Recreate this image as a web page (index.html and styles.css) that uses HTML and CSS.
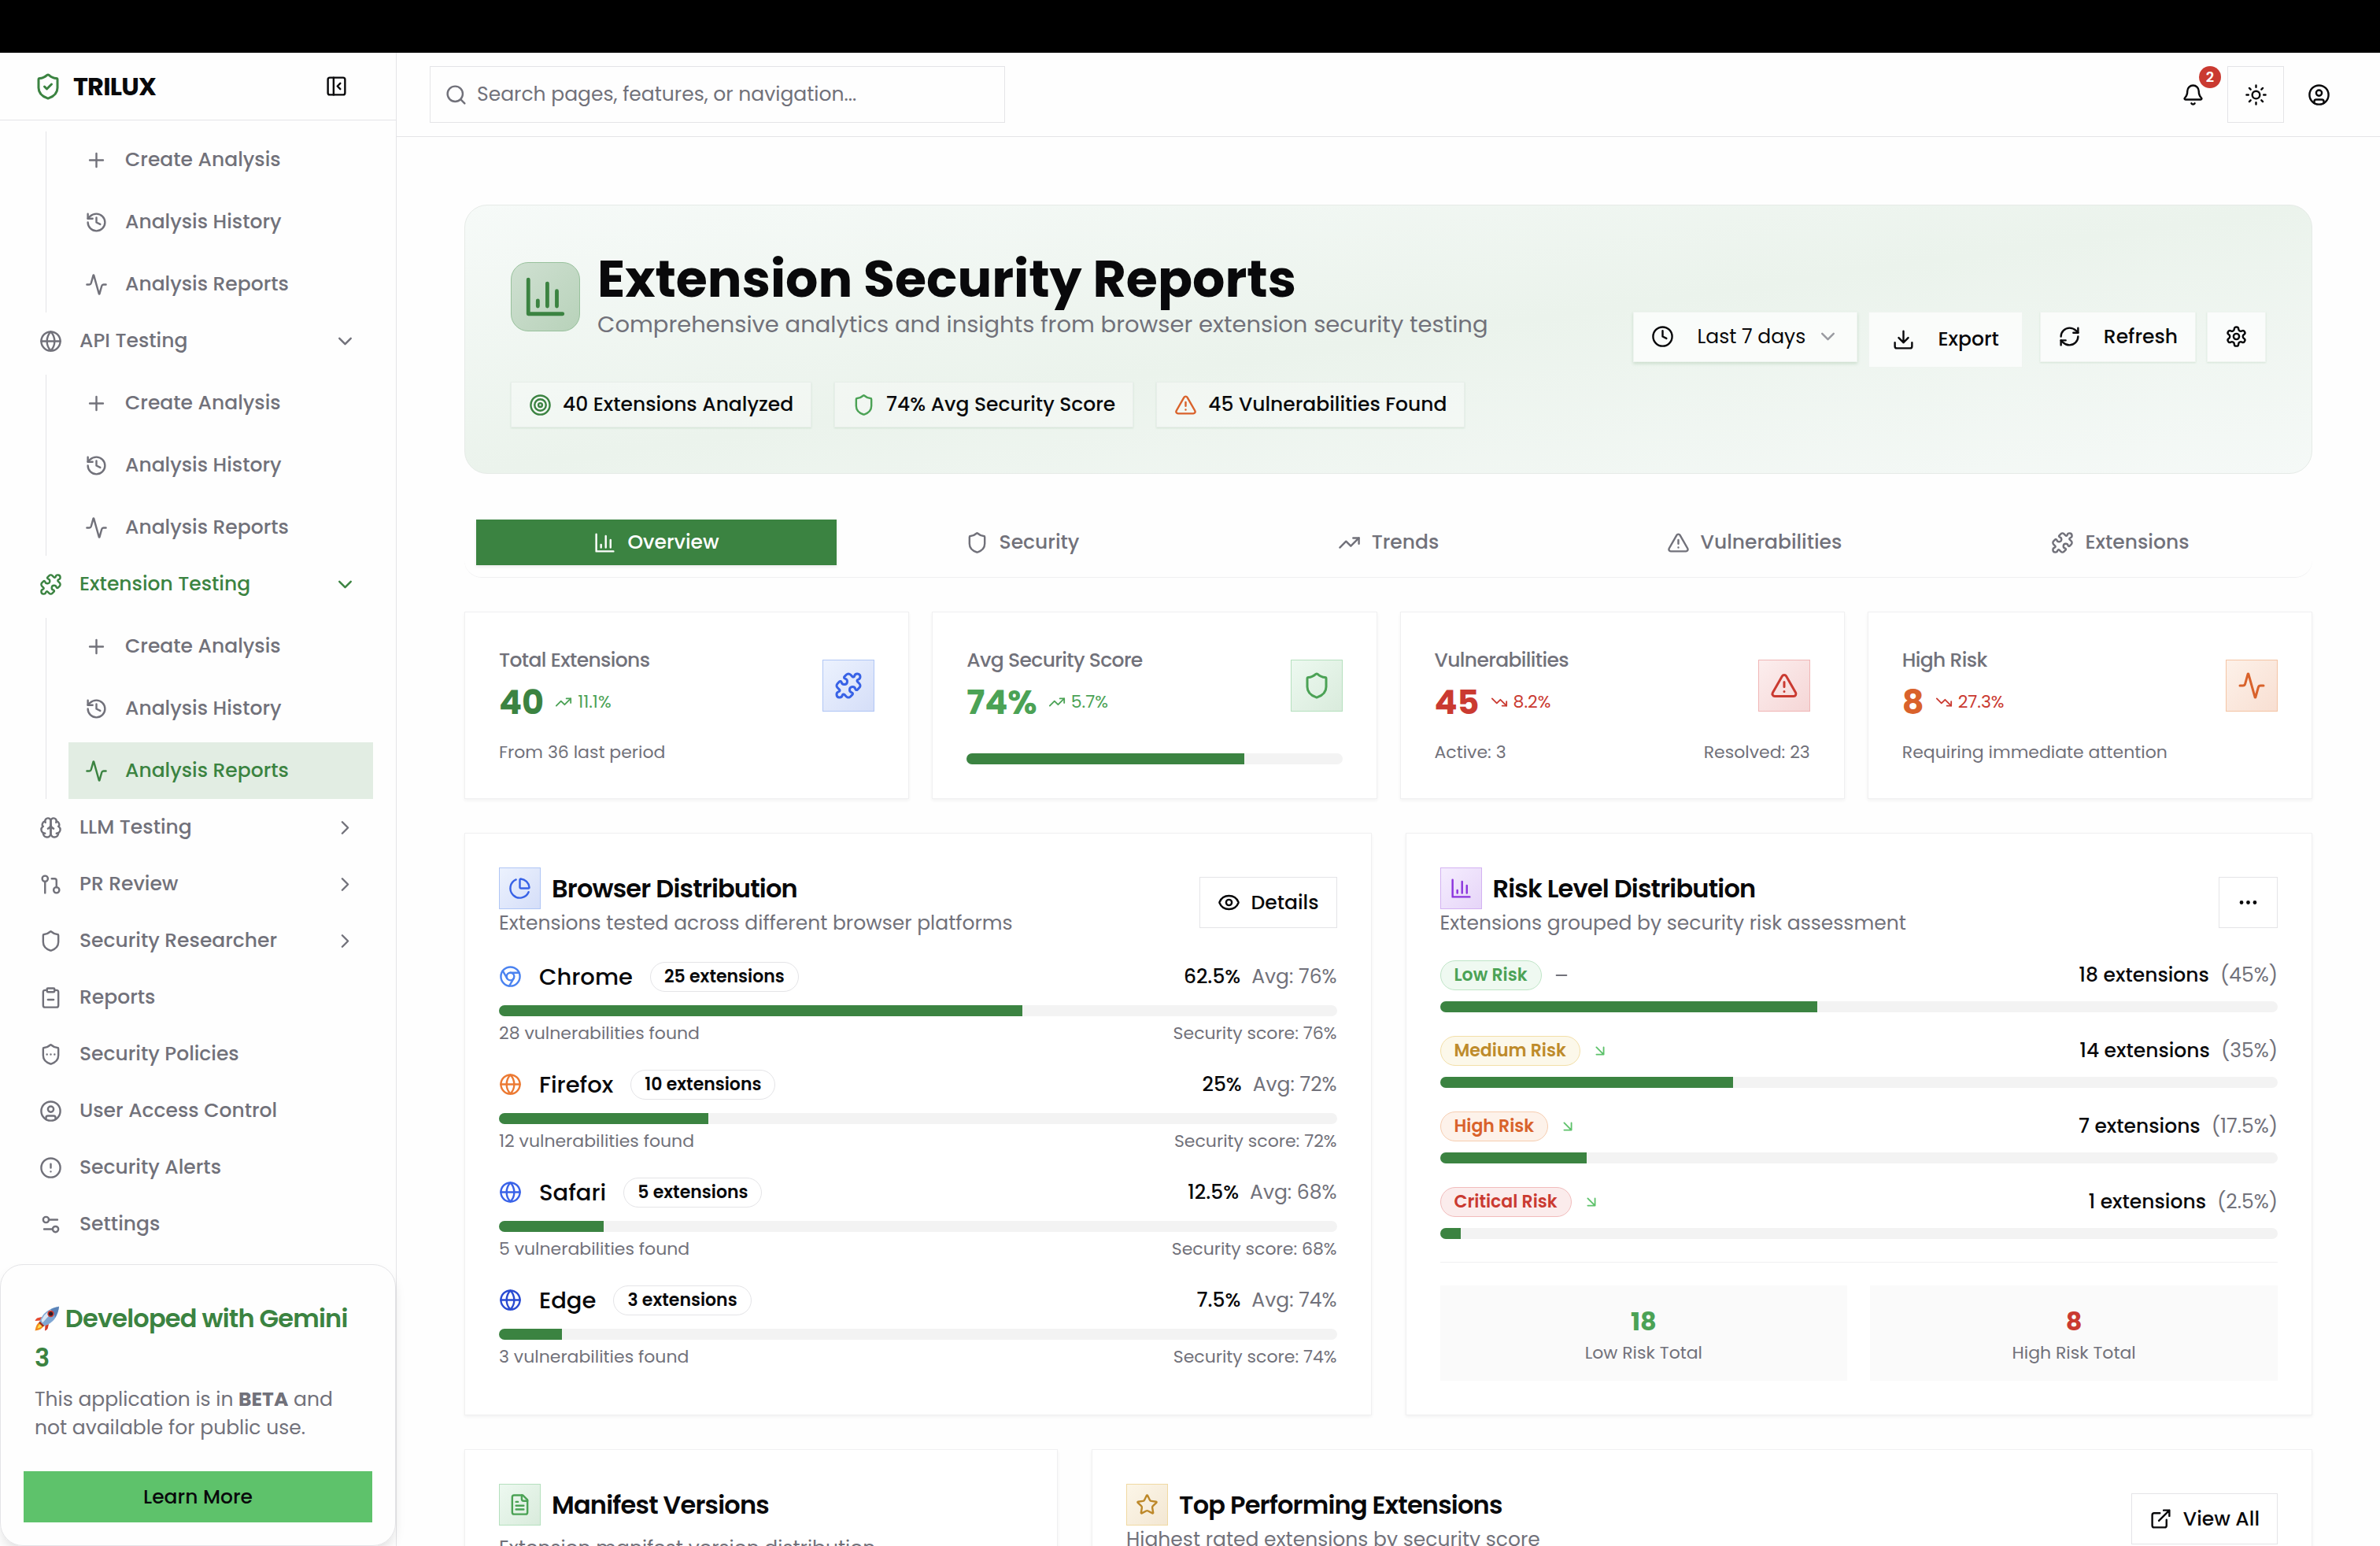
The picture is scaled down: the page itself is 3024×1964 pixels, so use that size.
FILE: index.html
```html
<!DOCTYPE html>
<html lang="en">
<head>
    <meta charset="UTF-8">
    <meta name="viewport" content="width=device-width, initial-scale=1.0">
    <title>TRILUX - Extension Security Reports</title>
    <link rel="stylesheet" href="styles.css">
</head>
<body>
    <!-- Icon sprite -->
    <svg class="sprite" aria-hidden="true">
        <symbol id="i-shield" viewBox="0 0 24 24"><path d="M20 13c0 5-3.5 7.5-7.66 8.95a1 1 0 0 1-.67-.01C7.5 20.5 4 18 4 13V6a1 1 0 0 1 1-1c2 0 4.5-1.2 6.24-2.72a1.17 1.17 0 0 1 1.52 0C14.51 3.81 17 5 19 5a1 1 0 0 1 1 1z"/></symbol>
        <symbol id="i-shield-check" viewBox="0 0 24 24"><path d="M20 13c0 5-3.5 7.5-7.66 8.95a1 1 0 0 1-.67-.01C7.5 20.5 4 18 4 13V6a1 1 0 0 1 1-1c2 0 4.5-1.2 6.24-2.72a1.17 1.17 0 0 1 1.52 0C14.51 3.81 17 5 19 5a1 1 0 0 1 1 1z"/><path d="m9 12 2 2 4-4"/></symbol>
        <symbol id="i-shield-dots" viewBox="0 0 24 24"><path d="M20 13c0 5-3.5 7.5-7.66 8.95a1 1 0 0 1-.67-.01C7.5 20.5 4 18 4 13V6a1 1 0 0 1 1-1c2 0 4.5-1.2 6.24-2.72a1.17 1.17 0 0 1 1.52 0C14.51 3.81 17 5 19 5a1 1 0 0 1 1 1z"/><path d="M8 12h.01M12 12h.01M16 12h.01"/></symbol>
        <symbol id="i-panel" viewBox="0 0 24 24"><rect width="18" height="18" x="3" y="3" rx="2"/><path d="M9 3v18"/><path d="m16 15-3-3 3-3"/></symbol>
        <symbol id="i-plus" viewBox="0 0 24 24"><path d="M5 12h14M12 5v14"/></symbol>
        <symbol id="i-minus" viewBox="0 0 24 24"><path d="M5 12h14"/></symbol>
        <symbol id="i-history" viewBox="0 0 24 24"><path d="M3 12a9 9 0 1 0 9-9 9.75 9.75 0 0 0-6.74 2.74L3 8"/><path d="M3 3v5h5"/><path d="M12 7v5l4 2"/></symbol>
        <symbol id="i-activity" viewBox="0 0 24 24"><path d="M22 12h-2.48a2 2 0 0 0-1.93 1.46l-2.35 8.36a.25.25 0 0 1-.48 0L9.24 2.18a.25.25 0 0 0-.48 0l-2.35 8.36A2 2 0 0 1 4.49 12H2"/></symbol>
        <symbol id="i-globe" viewBox="0 0 24 24"><circle cx="12" cy="12" r="10"/><path d="M12 2a14.5 14.5 0 0 0 0 20 14.5 14.5 0 0 0 0-20"/><path d="M2 12h20"/></symbol>
        <symbol id="i-puzzle" viewBox="0 0 24 24"><path d="M15.39 4.39a1 1 0 0 0 1.68-.474 2.5 2.5 0 1 1 3.014 3.015 1 1 0 0 0-.474 1.68l1.683 1.682a2.414 2.414 0 0 1 0 3.414L19.61 15.39a1 1 0 0 1-1.68-.474 2.5 2.5 0 1 0-3.014 3.015 1 1 0 0 1 .474 1.68l-1.683 1.682a2.414 2.414 0 0 1-3.414 0L8.61 19.61a1 1 0 0 0-1.68.474 2.5 2.5 0 1 1-3.014-3.015 1 1 0 0 0 .474-1.68l-1.683-1.682a2.414 2.414 0 0 1 0-3.414L4.39 8.61a1 1 0 0 1 1.68.474 2.5 2.5 0 1 0 3.014-3.015 1 1 0 0 1-.474-1.68l1.683-1.682a2.414 2.414 0 0 1 3.414 0z"/></symbol>
        <symbol id="i-brain" viewBox="0 0 24 24"><path d="M12 5a3 3 0 1 0-5.997.125 4 4 0 0 0-2.526 5.77 4 4 0 0 0 .556 6.588A4 4 0 1 0 12 18Z"/><path d="M12 5a3 3 0 1 1 5.997.125 4 4 0 0 1 2.526 5.77 4 4 0 0 1-.556 6.588A4 4 0 1 1 12 18Z"/><path d="M15 13a4.5 4.5 0 0 1-3-4 4.5 4.5 0 0 1-3 4"/><path d="M17.599 6.5a3 3 0 0 0 .399-1.375M6.003 5.125A3 3 0 0 0 6.401 6.5M3.477 10.896a4 4 0 0 1 .585-.396M19.938 10.5a4 4 0 0 1 .585.396M6 18a4 4 0 0 1-1.967-.516M19.967 17.484A4 4 0 0 1 18 18"/></symbol>
        <symbol id="i-pr" viewBox="0 0 24 24"><circle cx="18" cy="18" r="3"/><circle cx="6" cy="6" r="3"/><path d="M13 6h3a2 2 0 0 1 2 2v7M6 9v12"/></symbol>
        <symbol id="i-clipboard" viewBox="0 0 24 24"><rect width="8" height="4" x="8" y="2" rx="1"/><path d="M16 4h2a2 2 0 0 1 2 2v14a2 2 0 0 1-2 2H6a2 2 0 0 1-2-2V6a2 2 0 0 1 2-2h2"/><path d="M9 14h6"/></symbol>
        <symbol id="i-user" viewBox="0 0 24 24"><circle cx="12" cy="12" r="10"/><circle cx="12" cy="10" r="3"/><path d="M7 20.662V19a2 2 0 0 1 2-2h6a2 2 0 0 1 2 2v1.662"/></symbol>
        <symbol id="i-alert" viewBox="0 0 24 24"><circle cx="12" cy="12" r="10"/><path d="M12 8v4M12 16h.01"/></symbol>
        <symbol id="i-sliders" viewBox="0 0 24 24"><path d="M14 17H5M19 7h-9"/><circle cx="17" cy="17" r="3"/><circle cx="7" cy="7" r="3"/></symbol>
        <symbol id="i-down" viewBox="0 0 24 24"><path d="m6 9 6 6 6-6"/></symbol>
        <symbol id="i-right" viewBox="0 0 24 24"><path d="m9 18 6-6-6-6"/></symbol>
        <symbol id="i-search" viewBox="0 0 24 24"><circle cx="11" cy="11" r="8"/><path d="m21 21-4.3-4.3"/></symbol>
        <symbol id="i-bell" viewBox="0 0 24 24"><path d="M10.268 21a2 2 0 0 0 3.464 0"/><path d="M3.262 15.326A1 1 0 0 0 4 17h16a1 1 0 0 0 .74-1.673C19.41 13.956 18 12.499 18 8A6 6 0 0 0 6 8c0 4.499-1.411 5.956-2.738 7.326"/></symbol>
        <symbol id="i-sun" viewBox="0 0 24 24"><circle cx="12" cy="12" r="4"/><path d="M12 2v2M12 20v2M4.93 4.93l1.41 1.41M17.66 17.66l1.41 1.41M2 12h2M20 12h2M6.34 17.66l-1.41 1.41M19.07 4.93l-1.41 1.41"/></symbol>
        <symbol id="i-chart" viewBox="0 0 24 24"><path d="M3 3v18h18"/><path d="M18 17V9M13 17V5M8 17v-3"/></symbol>
        <symbol id="i-target" viewBox="0 0 24 24"><circle cx="12" cy="12" r="10"/><circle cx="12" cy="12" r="6"/><circle cx="12" cy="12" r="2"/></symbol>
        <symbol id="i-warning" viewBox="0 0 24 24"><path d="m21.73 18-8-14a2 2 0 0 0-3.48 0l-8 14A2 2 0 0 0 4 21h16a2 2 0 0 0 1.73-3"/><path d="M12 9v4M12 17h.01"/></symbol>
        <symbol id="i-clock" viewBox="0 0 24 24"><circle cx="12" cy="12" r="10"/><path d="M12 6v6l4 2"/></symbol>
        <symbol id="i-download" viewBox="0 0 24 24"><path d="M12 15V3M21 15v4a2 2 0 0 1-2 2H5a2 2 0 0 1-2-2v-4M7 10l5 5 5-5"/></symbol>
        <symbol id="i-refresh" viewBox="0 0 24 24"><path d="M3 12a9 9 0 0 1 9-9 9.75 9.75 0 0 1 6.74 2.74L21 8"/><path d="M21 3v5h-5"/><path d="M21 12a9 9 0 0 1-9 9 9.75 9.75 0 0 1-6.74-2.74L3 16"/><path d="M8 16H3v5"/></symbol>
        <symbol id="i-gear" viewBox="0 0 24 24"><path d="M12.22 2h-.44a2 2 0 0 0-2 2v.18a2 2 0 0 1-1 1.73l-.43.25a2 2 0 0 1-2 0l-.15-.08a2 2 0 0 0-2.73.73l-.22.38a2 2 0 0 0 .73 2.73l.15.1a2 2 0 0 1 1 1.72v.51a2 2 0 0 1-1 1.74l-.15.09a2 2 0 0 0-.73 2.73l.22.38a2 2 0 0 0 2.73.73l.15-.08a2 2 0 0 1 2 0l.43.25a2 2 0 0 1 1 1.73V20a2 2 0 0 0 2 2h.44a2 2 0 0 0 2-2v-.18a2 2 0 0 1 1-1.73l.43-.25a2 2 0 0 1 2 0l.15.08a2 2 0 0 0 2.73-.73l.22-.39a2 2 0 0 0-.73-2.73l-.15-.08a2 2 0 0 1-1-1.74v-.5a2 2 0 0 1 1-1.74l.15-.09a2 2 0 0 0 .73-2.73l-.22-.38a2 2 0 0 0-2.73-.73l-.15.08a2 2 0 0 1-2 0l-.43-.25a2 2 0 0 1-1-1.73V4a2 2 0 0 0-2-2z"/><circle cx="12" cy="12" r="3"/></symbol>
        <symbol id="i-trend-up" viewBox="0 0 24 24"><path d="M16 7h6v6"/><path d="m22 7-8.5 8.5-5-5L2 17"/></symbol>
        <symbol id="i-trend-down" viewBox="0 0 24 24"><path d="M16 17h6v-6"/><path d="m22 17-8.5-8.5-5 5L2 7"/></symbol>
        <symbol id="i-pie" viewBox="0 0 24 24"><path d="M21 12c.552 0 1.005-.449.95-.998a10 10 0 0 0-8.953-8.951c-.55-.055-.998.398-.998.95v8a1 1 0 0 0 1 1z"/><path d="M21.21 15.89A10 10 0 1 1 8 2.83"/></symbol>
        <symbol id="i-eye" viewBox="0 0 24 24"><path d="M2.062 12.348a1 1 0 0 1 0-.696 10.75 10.75 0 0 1 19.876 0 1 1 0 0 1 0 .696 10.75 10.75 0 0 1-19.876 0"/><circle cx="12" cy="12" r="3"/></symbol>
        <symbol id="i-chrome" viewBox="0 0 24 24"><circle cx="12" cy="12" r="10"/><circle cx="12" cy="12" r="4"/><path d="M21.17 8H12M3.95 6.06 8.54 14M10.88 21.94 15.46 14"/></symbol>
        <symbol id="i-dots" viewBox="0 0 24 24"><circle cx="5" cy="12" r="1"/><circle cx="12" cy="12" r="1"/><circle cx="19" cy="12" r="1"/></symbol>
        <symbol id="i-arrow-dr" viewBox="0 0 24 24"><path d="m7 7 10 10M17 7v10H7"/></symbol>
        <symbol id="i-file" viewBox="0 0 24 24"><path d="M15 2H6a2 2 0 0 0-2 2v16a2 2 0 0 0 2 2h12a2 2 0 0 0 2-2V7Z"/><path d="M14 2v4a2 2 0 0 0 2 2h4M10 9H8M16 13H8M16 17H8"/></symbol>
        <symbol id="i-star" viewBox="0 0 24 24"><path d="M11.525 2.295a.53.53 0 0 1 .95 0l2.31 4.679a2.123 2.123 0 0 0 1.595 1.16l5.166.756a.53.53 0 0 1 .294.904l-3.736 3.638a2.123 2.123 0 0 0-.611 1.878l.882 5.14a.53.53 0 0 1-.771.56l-4.618-2.428a2.122 2.122 0 0 0-1.973 0L6.396 21.01a.53.53 0 0 1-.77-.56l.881-5.139a2.122 2.122 0 0 0-.611-1.879L2.16 9.795a.53.53 0 0 1 .294-.906l5.165-.755a2.122 2.122 0 0 0 1.597-1.16z"/></symbol>
        <symbol id="i-external" viewBox="0 0 24 24"><path d="M15 3h6v6M10 14 21 3M18 13v6a2 2 0 0 1-2 2H5a2 2 0 0 1-2-2V8a2 2 0 0 1 2-2h6"/></symbol>
    </svg>

    <div class="top-strip"></div>

    <div class="app">
        <aside class="sidebar">
            <div class="brand">
                <svg class="icon icon-lg brand-icon"><use href="#i-shield-check"/></svg>
                <span class="brand-name">TRILUX</span>
                <button class="collapse-btn" aria-label="Collapse sidebar"><svg class="icon"><use href="#i-panel"/></svg></button>
            </div>

            <nav class="nav">
                <div class="nav-sub">
                    <a class="nav-item" href="#"><svg class="icon"><use href="#i-plus"/></svg>Create Analysis</a>
                    <a class="nav-item" href="#"><svg class="icon"><use href="#i-history"/></svg>Analysis History</a>
                    <a class="nav-item" href="#"><svg class="icon"><use href="#i-activity"/></svg>Analysis Reports</a>
                </div>
                <button class="nav-item"><svg class="icon"><use href="#i-globe"/></svg>API Testing<svg class="icon chevron"><use href="#i-down"/></svg></button>
                <div class="nav-sub spaced">
                    <a class="nav-item" href="#"><svg class="icon"><use href="#i-plus"/></svg>Create Analysis</a>
                    <a class="nav-item" href="#"><svg class="icon"><use href="#i-history"/></svg>Analysis History</a>
                    <a class="nav-item" href="#"><svg class="icon"><use href="#i-activity"/></svg>Analysis Reports</a>
                </div>
                <button class="nav-item open"><svg class="icon"><use href="#i-puzzle"/></svg>Extension Testing<svg class="icon chevron"><use href="#i-down"/></svg></button>
                <div class="nav-sub spaced">
                    <a class="nav-item" href="#"><svg class="icon"><use href="#i-plus"/></svg>Create Analysis</a>
                    <a class="nav-item" href="#"><svg class="icon"><use href="#i-history"/></svg>Analysis History</a>
                    <a class="nav-item active" href="#"><svg class="icon"><use href="#i-activity"/></svg>Analysis Reports</a>
                </div>
                <button class="nav-item"><svg class="icon"><use href="#i-brain"/></svg>LLM Testing<svg class="icon chevron"><use href="#i-right"/></svg></button>
                <button class="nav-item"><svg class="icon"><use href="#i-pr"/></svg>PR Review<svg class="icon chevron"><use href="#i-right"/></svg></button>
                <button class="nav-item"><svg class="icon"><use href="#i-shield"/></svg>Security Researcher<svg class="icon chevron"><use href="#i-right"/></svg></button>
                <a class="nav-item" href="#"><svg class="icon"><use href="#i-clipboard"/></svg>Reports</a>
                <a class="nav-item" href="#"><svg class="icon"><use href="#i-shield-dots"/></svg>Security Policies</a>
                <a class="nav-item" href="#"><svg class="icon"><use href="#i-user"/></svg>User Access Control</a>
                <a class="nav-item" href="#"><svg class="icon"><use href="#i-alert"/></svg>Security Alerts</a>
                <a class="nav-item" href="#"><svg class="icon"><use href="#i-sliders"/></svg>Settings</a>
            </nav>

            <div class="promo">
                <h3>
                    <svg class="rocket" viewBox="0 0 32 32" aria-hidden="true">
                        <path d="M9 14 3 15.500Q1 17 .5 19l7-.5z" fill="#e5482f"/>
                        <path d="M18 23l-1.500 6Q15 31 13 31.500l.5-7z" fill="#d33a28"/>
                        <path d="M7 20Q2 22 .5 31.500 9 30.500 12 25z" fill="#f28a1e"/>
                        <path d="M8 22.500Q4.500 24 3.500 28.500 8 28 10 24.500z" fill="#ffe04a"/>
                        <path d="M6.500 19.500Q12 4 31 .8 29 20 12.500 25.500z" fill="#7fa6d3"/>
                        <path d="M8.500 18Q14 5.500 31 .8 22 8 10 21.500z" fill="#dbe7f4"/>
                        <path d="M31 .8Q30 9 26 15 25 8 20 4.500 25 1.800 31 .8z" fill="#5a83b8"/>
                        <circle cx="20.500" cy="10" r="4.200" fill="#c9362c"/>
                        <circle cx="20.500" cy="10" r="2.600" fill="#2b1d2a"/>
                        <path d="M6.500 19.500l6 6-2.500.8-4.500-4.500z" fill="#9c2b22"/>
                    </svg>
                    Developed with Gemini 3
                </h3>
                <p>This application is in <strong>BETA</strong> and not available for public use.</p>
                <button class="learn-btn">Learn More</button>
            </div>
        </aside>

        <div class="main">
            <header class="topbar">
                <label class="search">
                    <svg class="icon"><use href="#i-search"/></svg>
                    <input type="text" placeholder="Search pages, features, or navigation..." aria-label="Search">
                </label>
                <div class="top-actions">
                    <button class="icon-btn" aria-label="Notifications"><svg class="icon"><use href="#i-bell"/></svg><span class="count">2</span></button>
                    <button class="icon-btn bordered" aria-label="Toggle theme"><svg class="icon"><use href="#i-sun"/></svg></button>
                    <button class="icon-btn" aria-label="Account"><svg class="icon"><use href="#i-user"/></svg></button>
                </div>
            </header>

            <main class="content">
                <section class="hero">
                    <div class="hero-info">
                        <div class="hero-head">
                            <div class="hero-icon"><svg class="icon"><use href="#i-chart"/></svg></div>
                            <div>
                                <h1>Extension Security Reports</h1>
                                <p>Comprehensive analytics and insights from browser extension security testing</p>
                            </div>
                        </div>
                        <div class="pills">
                            <div class="pill"><svg class="icon primary"><use href="#i-target"/></svg>40 Extensions Analyzed</div>
                            <div class="pill"><svg class="icon green"><use href="#i-shield"/></svg>74% Avg Security Score</div>
                            <div class="pill"><svg class="icon orange"><use href="#i-warning"/></svg>45 Vulnerabilities Found</div>
                        </div>
                    </div>
                    <div class="hero-actions">
                        <label class="hero-btn period">
                            <svg class="icon"><use href="#i-clock"/></svg>
                            <select aria-label="Period">
                                <option>Last 7 days</option>
                            </select>
                            <svg class="icon muted"><use href="#i-down"/></svg>
                        </label>
                        <button class="hero-btn export"><svg class="icon"><use href="#i-download"/></svg>Export</button>
                        <button class="hero-btn"><svg class="icon"><use href="#i-refresh"/></svg>Refresh</button>
                        <button class="hero-btn" aria-label="Settings"><svg class="icon"><use href="#i-gear"/></svg></button>
                    </div>
                </section>

                <div class="tabs" role="tablist">
                    <button class="tab active" role="tab" aria-selected="true"><svg class="icon"><use href="#i-chart"/></svg>Overview</button>
                    <button class="tab" role="tab"><svg class="icon"><use href="#i-shield"/></svg>Security</button>
                    <button class="tab" role="tab"><svg class="icon"><use href="#i-trend-up"/></svg>Trends</button>
                    <button class="tab" role="tab"><svg class="icon"><use href="#i-warning"/></svg>Vulnerabilities</button>
                    <button class="tab" role="tab"><svg class="icon"><use href="#i-puzzle"/></svg>Extensions</button>
                </div>

                <section class="stats">
                    <div class="card stat">
                        <div class="stat-top">
                            <div>
                                <div class="stat-label">Total Extensions</div>
                                <div class="stat-line"><span class="stat-value primary">40</span><span class="trend green"><svg class="icon icon-sm"><use href="#i-trend-up"/></svg>11.1%</span></div>
                            </div>
                            <div class="tile tile-lg blue"><svg class="icon icon-lg"><use href="#i-puzzle"/></svg></div>
                        </div>
                        <div class="stat-foot"><span>From 36 last period</span></div>
                    </div>
                    <div class="card stat">
                        <div class="stat-top">
                            <div>
                                <div class="stat-label">Avg Security Score</div>
                                <div class="stat-line"><span class="stat-value green">74%</span><span class="trend green"><svg class="icon icon-sm"><use href="#i-trend-up"/></svg>5.7%</span></div>
                            </div>
                            <div class="tile tile-lg mint"><svg class="icon icon-lg"><use href="#i-shield"/></svg></div>
                        </div>
                        <div class="stat-foot"><div class="bar"><div class="fill" style="width: 74%"></div></div></div>
                    </div>
                    <div class="card stat">
                        <div class="stat-top">
                            <div>
                                <div class="stat-label">Vulnerabilities</div>
                                <div class="stat-line"><span class="stat-value red">45</span><span class="trend red"><svg class="icon icon-sm"><use href="#i-trend-down"/></svg>8.2%</span></div>
                            </div>
                            <div class="tile tile-lg rose"><svg class="icon icon-lg"><use href="#i-warning"/></svg></div>
                        </div>
                        <div class="stat-foot"><span>Active: 3</span><span>Resolved: 23</span></div>
                    </div>
                    <div class="card stat">
                        <div class="stat-top">
                            <div>
                                <div class="stat-label">High Risk</div>
                                <div class="stat-line"><span class="stat-value orange">8</span><span class="trend red"><svg class="icon icon-sm"><use href="#i-trend-down"/></svg>27.3%</span></div>
                            </div>
                            <div class="tile tile-lg peach"><svg class="icon icon-lg"><use href="#i-activity"/></svg></div>
                        </div>
                        <div class="stat-foot"><span>Requiring immediate attention</span></div>
                    </div>
                </section>

                <section class="halves">
                    <div class="card">
                        <div class="card-head">
                            <div>
                                <h2><span class="tile blue"><svg class="icon"><use href="#i-pie"/></svg></span>Browser Distribution</h2>
                                <p>Extensions tested across different browser platforms</p>
                            </div>
                            <button class="outline-btn"><svg class="icon"><use href="#i-eye"/></svg>Details</button>
                        </div>
                        <div class="rows">
                            <div class="browser">
                                <div class="row-line"><svg class="icon chrome"><use href="#i-chrome"/></svg><span class="name">Chrome</span><span class="badge">25 extensions</span><span class="amount">62.5%</span><span class="muted">Avg: 76%</span></div>
                                <div class="bar"><div class="fill" style="width: 62.5%"></div></div>
                                <div class="row-foot"><span>28 vulnerabilities found</span><span>Security score: 76%</span></div>
                            </div>
                            <div class="browser">
                                <div class="row-line"><svg class="icon firefox"><use href="#i-globe"/></svg><span class="name">Firefox</span><span class="badge">10 extensions</span><span class="amount">25%</span><span class="muted">Avg: 72%</span></div>
                                <div class="bar"><div class="fill" style="width: 25%"></div></div>
                                <div class="row-foot"><span>12 vulnerabilities found</span><span>Security score: 72%</span></div>
                            </div>
                            <div class="browser">
                                <div class="row-line"><svg class="icon safari"><use href="#i-globe"/></svg><span class="name">Safari</span><span class="badge">5 extensions</span><span class="amount">12.5%</span><span class="muted">Avg: 68%</span></div>
                                <div class="bar"><div class="fill" style="width: 12.5%"></div></div>
                                <div class="row-foot"><span>5 vulnerabilities found</span><span>Security score: 68%</span></div>
                            </div>
                            <div class="browser">
                                <div class="row-line"><svg class="icon edge"><use href="#i-globe"/></svg><span class="name">Edge</span><span class="badge">3 extensions</span><span class="amount">7.5%</span><span class="muted">Avg: 74%</span></div>
                                <div class="bar"><div class="fill" style="width: 7.5%"></div></div>
                                <div class="row-foot"><span>3 vulnerabilities found</span><span>Security score: 74%</span></div>
                            </div>
                        </div>
                    </div>

                    <div class="card">
                        <div class="card-head">
                            <div>
                                <h2><span class="tile violet"><svg class="icon"><use href="#i-chart"/></svg></span>Risk Level Distribution</h2>
                                <p>Extensions grouped by security risk assessment</p>
                            </div>
                            <button class="outline-btn" aria-label="More"><svg class="icon"><use href="#i-dots"/></svg></button>
                        </div>
                        <div class="rows">
                            <div class="risk">
                                <div class="risk-line"><span class="badge low">Low Risk</span><svg class="icon icon-sm muted"><use href="#i-minus"/></svg><span class="amount">18 extensions</span><span class="muted">(45%)</span></div>
                                <div class="bar"><div class="fill" style="width: 45%"></div></div>
                            </div>
                            <div class="risk">
                                <div class="risk-line"><span class="badge medium">Medium Risk</span><svg class="icon icon-sm light"><use href="#i-arrow-dr"/></svg><span class="amount">14 extensions</span><span class="muted">(35%)</span></div>
                                <div class="bar"><div class="fill" style="width: 35%"></div></div>
                            </div>
                            <div class="risk">
                                <div class="risk-line"><span class="badge high">High Risk</span><svg class="icon icon-sm light"><use href="#i-arrow-dr"/></svg><span class="amount">7 extensions</span><span class="muted">(17.5%)</span></div>
                                <div class="bar"><div class="fill" style="width: 17.5%"></div></div>
                            </div>
                            <div class="risk">
                                <div class="risk-line"><span class="badge critical">Critical Risk</span><svg class="icon icon-sm light"><use href="#i-arrow-dr"/></svg><span class="amount">1 extensions</span><span class="muted">(2.5%)</span></div>
                                <div class="bar"><div class="fill" style="width: 2.5%"></div></div>
                            </div>
                            <div class="totals">
                                <div class="total"><strong class="green">18</strong><span>Low Risk Total</span></div>
                                <div class="total"><strong class="red">8</strong><span>High Risk Total</span></div>
                            </div>
                        </div>
                    </div>
                </section>

                <section class="thirds">
                    <div class="card">
                        <div class="card-head stacked">
                            <h2><span class="tile mint"><svg class="icon"><use href="#i-file"/></svg></span>Manifest Versions</h2>
                            <p>Extension manifest version distribution</p>
                        </div>
                    </div>
                    <div class="card wide">
                        <div class="card-head">
                            <div>
                                <h2><span class="tile amber"><svg class="icon"><use href="#i-star"/></svg></span>Top Performing Extensions</h2>
                                <p>Highest rated extensions by security score</p>
                            </div>
                            <button class="outline-btn"><svg class="icon"><use href="#i-external"/></svg>View All</button>
                        </div>
                    </div>
                </section>
            </main>
        </div>
    </div>
</body>
</html>
```
FILE: styles.css
```css
:root {
    --primary: #3b8341;
    --green: #4ba255;
    --light-green: #5ec26b;
    --red: #ca3a31;
    --orange: #d9622b;
    --text: #09090b;
    --muted: #71717a;
    --border: #e4e4e7;
    --soft-border: #f0f0f1;
    --track: #f3f3f3;
    --text-xs: 22px;
    --text-sm: 25px;
    --text-base: 29px;
    --text-lg: 32px;
}

* {
    box-sizing: border-box;
}

body {
    margin: 0;
    height: 100vh;
    display: flex;
    flex-direction: column;
    overflow: hidden;
    font-family: "Poppins", "Inter", sans-serif;
    font-size: var(--text-sm);
    line-height: 36px;
    color: var(--text);
    background: #fefefe;
}

h1, h2, h3, p {
    margin: 0;
}

a {
    color: inherit;
    text-decoration: none;
}

button, input, select {
    font: inherit;
    color: inherit;
    border: 0;
    padding: 0;
    background: none;
}

button {
    cursor: pointer;
}

.sprite {
    display: none;
}

.icon {
    width: 29px;
    height: 29px;
    flex-shrink: 0;
    fill: none;
    stroke: currentColor;
    stroke-width: 2;
    stroke-linecap: round;
    stroke-linejoin: round;
}

.icon-sm {
    width: 22px;
    height: 22px;
}

.icon-lg {
    width: 36px;
    height: 36px;
}

.primary { color: var(--primary); }
.green { color: var(--green); }
.light { color: var(--light-green); }
.red { color: var(--red); }
.orange { color: var(--orange); }
.muted { color: var(--muted); }
.chrome { color: #4b83f0; }
.firefox { color: #ec7a33; }
.safari { color: #3a63e8; }
.edge { color: #2a4bd2; }

.top-strip {
    height: 67px;
    flex-shrink: 0;
    background: #000;
}

.app {
    flex: 1;
    min-height: 0;
    display: flex;
}

/* Sidebar */
.sidebar {
    width: 504px;
    flex-shrink: 0;
    display: flex;
    flex-direction: column;
    border-right: 1px solid var(--border);
}

.brand {
    height: 86px;
    flex-shrink: 0;
    display: flex;
    align-items: center;
    padding: 0 61px 0 43px;
    border-bottom: 1px solid var(--border);
}

.brand-icon {
    color: var(--primary);
}

.brand-name {
    margin-left: 14px;
    font-size: var(--text-lg);
    font-weight: 700;
    letter-spacing: -0.025em;
}

.collapse-btn {
    display: flex;
    margin-left: auto;
}

.nav {
    flex: 1;
    min-height: 0;
    overflow: hidden;
    padding: 14px 29px 0;
}

.nav-item {
    width: 100%;
    height: 72px;
    display: flex;
    align-items: center;
    gap: 22px;
    padding: 0 21px;
    font-weight: 500;
    text-align: left;
    color: var(--muted);
}

.nav-item.open {
    color: var(--primary);
}

.nav-item.active {
    color: var(--primary);
    background: #e2ede3;
}

.chevron {
    margin-left: auto;
}

.nav-sub {
    display: flex;
    flex-direction: column;
    gap: 7px;
    margin-left: 29px;
    padding-left: 28px;
    border-left: 1px solid var(--border);
}

.nav-sub.spaced {
    margin-top: 7px;
}

.promo {
    padding: 43px 29px 29px;
    border: 1px solid var(--border);
    border-radius: 29px;
    box-shadow: 0 8px 16px -4px rgba(0, 0, 0, 0.15);
}

.promo h3 {
    padding: 0 14px;
    font-size: var(--text-lg);
    font-weight: 600;
    line-height: 50px;
    letter-spacing: -0.025em;
    color: var(--primary);
}

.rocket {
    width: 32px;
    height: 32px;
    vertical-align: -5px;
}

.promo p {
    padding: 10px 14px 0;
    color: var(--muted);
}

.learn-btn {
    width: 100%;
    height: 65px;
    margin-top: 37px;
    font-weight: 500;
    background: var(--light-green);
}

/* Top bar */
.main {
    flex: 1;
    min-width: 0;
    display: flex;
    flex-direction: column;
}

.topbar {
    height: 107px;
    flex-shrink: 0;
    display: flex;
    align-items: center;
    justify-content: space-between;
    padding: 0 42px;
    border-bottom: 1px solid var(--border);
}

.search {
    width: 30%;
    height: 72px;
    display: flex;
    align-items: center;
    gap: 12px;
    padding: 0 18px;
    border: 1px solid var(--border);
    color: var(--muted);
}

.search input {
    flex: 1;
    outline: none;
}

.search input::placeholder {
    color: var(--muted);
    opacity: 1;
}

.top-actions {
    display: flex;
    gap: 8px;
}

.icon-btn {
    position: relative;
    width: 72px;
    height: 72px;
    display: flex;
    align-items: center;
    justify-content: center;
}

.icon-btn.bordered {
    border: 1px solid var(--border);
}

.count {
    position: absolute;
    top: 0;
    right: 0;
    width: 28px;
    height: 28px;
    border-radius: 50%;
    font-size: 18px;
    font-weight: 600;
    line-height: 28px;
    color: #fff;
    background: var(--red);
}

/* Content */
.content {
    flex: 1;
    min-height: 0;
    display: flex;
    flex-direction: column;
    gap: 43px;
    padding: 86px 86px 0;
    overflow: hidden;
}

.content > * {
    flex-shrink: 0;
}

.hero {
    display: flex;
    align-items: center;
    justify-content: space-between;
    padding: 58px;
    border: 1px solid #e6ebe7;
    border-radius: 29px;
    background: linear-gradient(to bottom right, #f6faf8, #ebf3ec 50%, #f5f9f7);
}

.hero-head {
    display: flex;
    align-items: center;
    gap: 22px;
}

.hero-icon {
    padding: 14px;
    border: 1px solid #98c19c;
    border-radius: 22px;
    color: var(--primary);
    background: linear-gradient(to bottom right, #cfe0d1, #b8d2ba);
}

.hero-icon .icon {
    display: block;
    width: 58px;
    height: 58px;
}

.hero h1 {
    font-size: 65px;
    font-weight: 700;
    line-height: 72px;
}

.hero p {
    font-size: var(--text-base);
    line-height: 43px;
    color: var(--muted);
}

.pills {
    display: flex;
    gap: 29px;
    margin-top: 51px;
}

.pill {
    height: 58px;
    display: flex;
    align-items: center;
    gap: 14px;
    padding: 0 22px;
    border: 1px solid #e8eeea;
    font-weight: 500;
    background: rgba(255, 255, 255, 0.3);
    box-shadow: 0 1px 2px rgba(59, 131, 65, 0.15);
}

.hero-actions {
    display: flex;
    align-items: flex-start;
    gap: 14px;
}

.hero-btn {
    height: 64px;
    display: flex;
    align-items: center;
    gap: 29px;
    padding: 0 22px;
    border: 1px solid #eff4f0;
    font-weight: 500;
    background: rgba(255, 255, 255, 0.7);
    box-shadow: 0 1px 2px rgba(59, 131, 65, 0.15);
}

.hero-btn.export {
    height: 71px;
    margin-right: 8px;
    padding: 0 29px;
    box-shadow: none;
}

.period {
    box-shadow: 0 2px 4px rgba(59, 131, 65, 0.2);
}

.period select {
    appearance: none;
    outline: none;
    font-weight: 400;
}

.period .muted {
    margin-left: -15px;
    opacity: 0.7;
}

/* Tabs */
.tabs {
    display: flex;
    gap: 7px;
    padding: 15px;
    border-bottom: 1px solid var(--soft-border);
    border-radius: 22px;
}

.tab {
    flex: 1;
    height: 58px;
    display: flex;
    align-items: center;
    justify-content: center;
    gap: 14px;
    font-weight: 500;
    color: var(--muted);
}

.tab.active {
    color: #fff;
    background: var(--primary);
    box-shadow: 0 2px 4px rgba(0, 0, 0, 0.08);
}

/* Cards */
.card {
    padding: 43px;
    border: 1px solid var(--soft-border);
    background: #fff;
    box-shadow: 0 2px 4px rgba(0, 0, 0, 0.05);
}

.tile {
    display: flex;
    padding: 11px;
    border: 1px solid;
}

.tile-lg {
    padding: 14px;
}

.tile.blue {
    border-color: #b0c6f5;
    background: linear-gradient(to bottom right, #ecf2fe, #d5def8);
    color: #3862e6;
}

.tile.mint {
    border-color: #b5e0be;
    background: linear-gradient(to bottom right, #edf9f0, #d9ebdc);
    color: var(--green);
}

.tile.rose {
    border-color: #f0b6b6;
    background: linear-gradient(to bottom right, #fceeee, #f5d6d6);
    color: var(--red);
}

.tile.peach {
    border-color: #f4c4a4;
    background: linear-gradient(to bottom right, #fdf1e9, #f8dfd2);
    color: var(--orange);
}

.tile.violet {
    border-color: #d3b2f2;
    background: linear-gradient(to bottom right, #f5edfe, #e6d5f8);
    color: #8b35dd;
}

.tile.amber {
    border-color: #f0d9a2;
    background: linear-gradient(to bottom right, #fcf6e8, #f3e7d3);
    color: #bd8829;
}

.stats {
    display: grid;
    grid-template-columns: repeat(4, 1fr);
    gap: 29px;
}

.stat-top {
    display: flex;
    align-items: center;
    justify-content: space-between;
}

.stat-label {
    font-weight: 500;
    letter-spacing: -0.025em;
    color: var(--muted);
}

.stat-line {
    display: flex;
    align-items: center;
    gap: 14px;
    margin-top: 6px;
}

.stat-value {
    font-size: 43px;
    font-weight: 700;
    line-height: 58px;
}

.trend {
    display: flex;
    align-items: center;
    gap: 7px;
    font-size: var(--text-xs);
}

.stat-foot {
    display: flex;
    justify-content: space-between;
    margin-top: 20px;
    font-size: var(--text-xs);
    line-height: 30px;
    color: var(--muted);
}

.bar {
    width: 100%;
    height: 14px;
    border-radius: 7px;
    overflow: hidden;
    background: var(--track);
}

.stat-foot .bar {
    margin-top: 16px;
}

.fill {
    height: 100%;
    background: var(--primary);
}

.halves {
    display: grid;
    grid-template-columns: repeat(2, 1fr);
    gap: 43px;
}

.thirds {
    display: grid;
    grid-template-columns: repeat(3, 1fr);
    gap: 43px;
}

.wide {
    grid-column: span 2;
}

.card-head {
    display: flex;
    align-items: center;
    justify-content: space-between;
}

.card-head.stacked {
    flex-direction: column;
    align-items: flex-start;
    gap: 11px;
}

.card-head h2 {
    display: flex;
    align-items: center;
    gap: 14px;
    font-size: var(--text-lg);
    font-weight: 600;
    letter-spacing: -0.025em;
}

.card-head p {
    color: var(--muted);
}

.outline-btn {
    height: 65px;
    display: flex;
    align-items: center;
    gap: 14px;
    padding: 0 22px;
    border: 1px solid var(--border);
    font-weight: 500;
}

.rows {
    display: flex;
    flex-direction: column;
    gap: 29px;
    margin-top: 28px;
}

.row-line {
    height: 43px;
    display: flex;
    align-items: center;
    margin-bottom: 15px;
}

.name {
    margin: 0 22px;
    font-size: var(--text-base);
    font-weight: 500;
}

.badge {
    height: 38px;
    padding: 0 17px;
    border: 1px solid var(--border);
    border-radius: 19px;
    font-size: var(--text-xs);
    font-weight: 600;
}

.amount {
    margin: 0 14px 0 auto;
    font-weight: 500;
}

.row-foot {
    display: flex;
    justify-content: space-between;
    margin-top: 7px;
    font-size: var(--text-xs);
    line-height: 29px;
    color: var(--muted);
}

.risk-line {
    height: 39px;
    display: flex;
    align-items: center;
    margin-bottom: 14px;
}

.risk-line .badge {
    margin-right: 14px;
}

.badge.low {
    color: var(--green);
    border-color: #bfe5c7;
    background: #eff9f1;
}

.badge.medium {
    color: #be8b2b;
    border-color: #f3dfa8;
    background: #fcf8ea;
}

.badge.high {
    color: var(--orange);
    border-color: #f6cdb0;
    background: #fdf2ea;
}

.badge.critical {
    color: var(--red);
    border-color: #f2bcbc;
    background: #fbecec;
}

.totals {
    display: grid;
    grid-template-columns: repeat(2, 1fr);
    gap: 29px;
    padding-top: 29px;
    border-top: 1px solid var(--soft-border);
}

.total {
    display: flex;
    flex-direction: column;
    align-items: center;
    padding: 21px;
    font-size: var(--text-xs);
    line-height: 29px;
    color: var(--muted);
    background: #fafafa;
}

.total strong {
    font-size: var(--text-lg);
    font-weight: 700;
    line-height: 50px;
}
```
